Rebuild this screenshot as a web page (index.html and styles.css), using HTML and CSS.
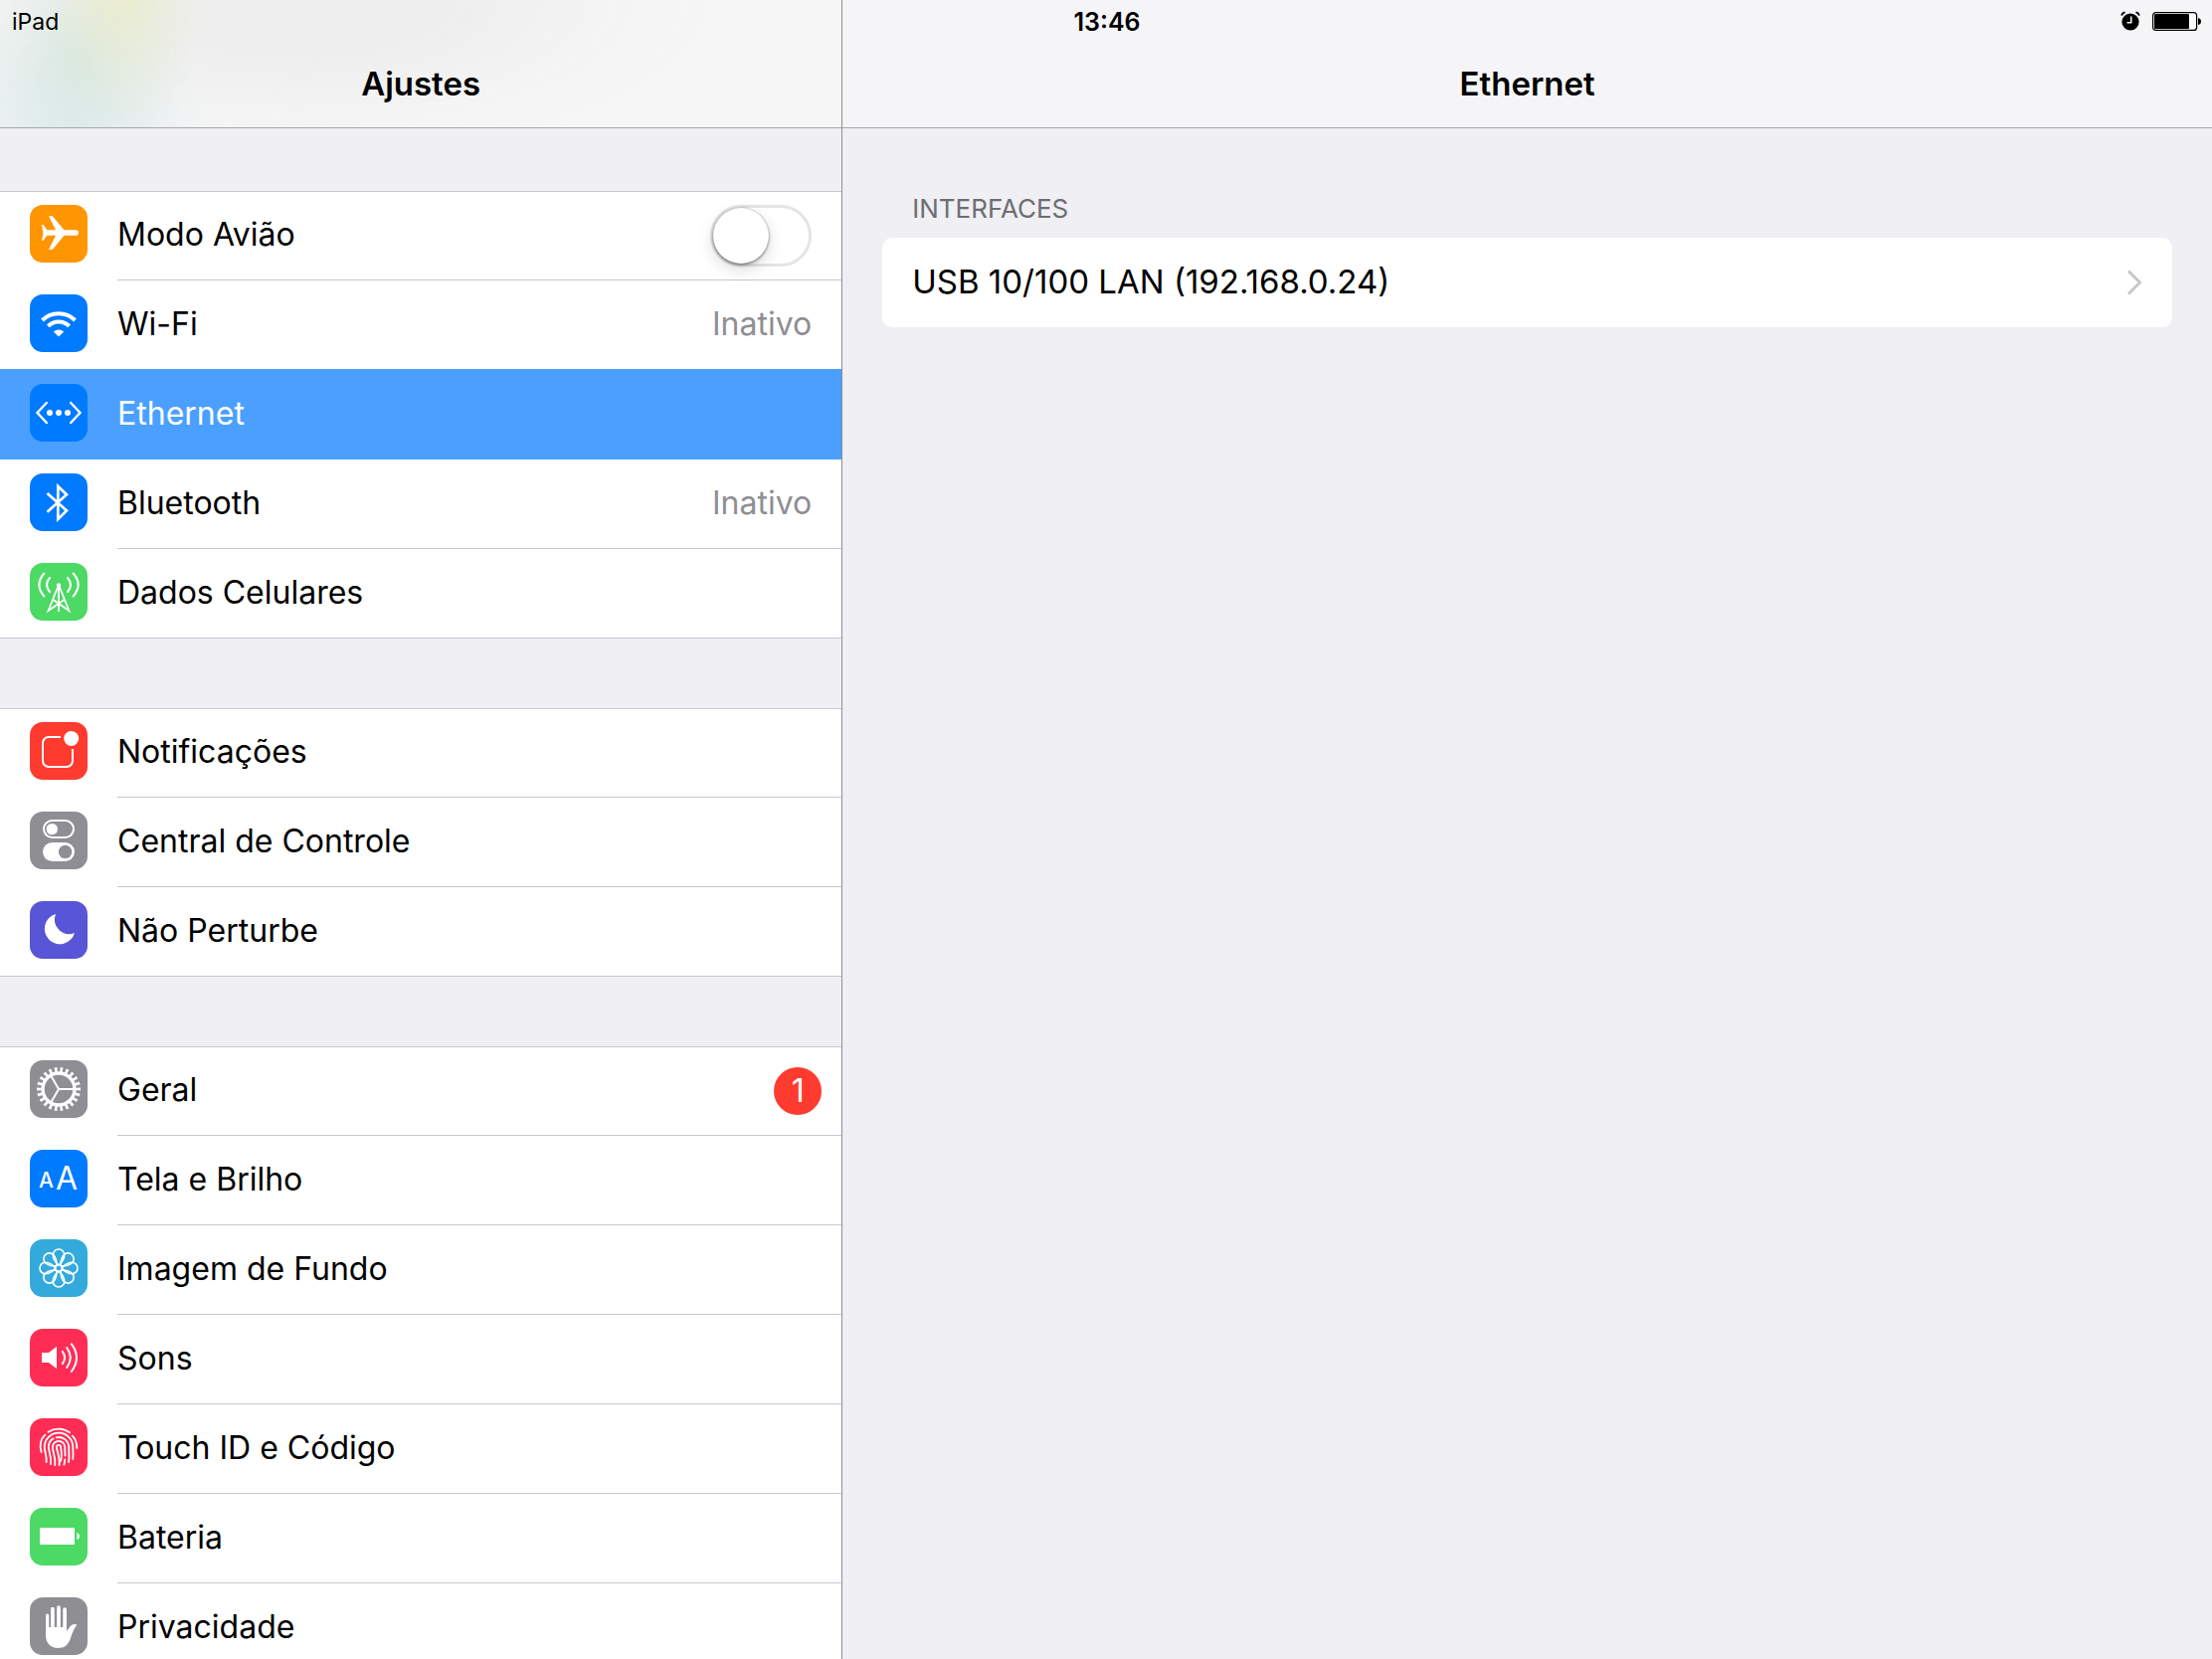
FILE: index.html
```html
<!DOCTYPE html>
<html lang="pt-BR">
<head>
    <meta charset="UTF-8">
    <meta name="viewport" content="width=device-width, initial-scale=1.0">
    <title>Ajustes</title>
    <link rel="stylesheet" href="styles.css">
</head>
<body>
    <div class="status-bar">
        <span class="device">iPad</span>
        <time class="clock">13:46</time>
        <div class="status-icons">
            <svg width="20" height="20" viewBox="0 0 20 20" role="img" aria-label="Alarme">
                <circle cx="10" cy="11" r="8.6"/>
                <path d="M1.2 4.6A4 4 0 0 1 4.6 1.4M18.8 4.6A4 4 0 0 0 15.4 1.4" fill="none" stroke="#000" stroke-width="1.8"/>
                <path d="M10.7 5.5v6.2H6.5" fill="none" stroke="#f5f5f7" stroke-width="1.6"/>
            </svg>
            <svg width="50" height="20" viewBox="0 0 50 20" role="img" aria-label="Bateria">
                <rect x="0.6" y="1.6" width="44" height="17.8" rx="3" fill="#fff" stroke="#000" stroke-width="1.2"/>
                <rect x="2" y="3" width="35" height="15" rx="1"/>
                <path d="M46 7q3 .5 3 3.5t-3 3.5z"/>
            </svg>
        </div>
    </div>

    <div class="app">
        <section class="sidebar">
            <header class="navbar navbar-sidebar">
                <h1>Ajustes</h1>
            </header>
            <nav class="menu">
                <ul class="group">
                    <li>
                        <label class="row" for="airplane">
                            <svg class="icon orange" viewBox="0 0 58 58">
                                <path class="fill" d="M12 20h1.6l3.6 5.3H26L19 11.3h3.7L34.5 25.3H46.3a2.7 2.7 0 0 1 0 5.4H34.5L22.7 45H19l7-14.3h-8.8L13.6 36H12l1.4-8z"/>
                            </svg>
                            <span class="content">
                                <span class="title">Modo Avião</span>
                                <input class="switch" type="checkbox" role="switch" id="airplane">
                            </span>
                        </label>
                    </li>
                    <li>
                        <a class="row" href="#wifi">
                            <svg class="icon blue" viewBox="0 0 58 58">
                                <path class="line" stroke-width="4" d="M12.5 26A23.3 23.3 0 0 1 45.5 26M18.4 31.9A15 15 0 0 1 39.6 31.9"/>
                                <path class="fill" d="M29 42.5L23.8 37.5A7.8 7.8 0 0 1 34.2 37.5z"/>
                            </svg>
                            <span class="content"><span class="title">Wi-Fi</span><span class="value">Inativo</span></span>
                        </a>
                    </li>
                    <li>
                        <a class="row selected" href="#ethernet" aria-current="page">
                            <svg class="icon blue" viewBox="0 0 58 58">
                                <path class="line" stroke-width="2.4" stroke-linecap="round" d="M16.8 19L7.5 29l9.3 10M41.2 19l9.3 10-9.3 10"/>
                                <circle class="fill" cx="20" cy="29" r="3"/>
                                <circle class="fill" cx="29" cy="29" r="3"/>
                                <circle class="fill" cx="38" cy="29" r="3"/>
                            </svg>
                            <span class="content"><span class="title">Ethernet</span></span>
                        </a>
                    </li>
                    <li>
                        <a class="row" href="#bluetooth">
                            <svg class="icon blue" viewBox="0 0 58 58">
                                <path class="line" stroke-width="2.7" d="M17.5 20L37 37.4L28.3 46V13L37 21.3L17.5 38.7"/>
                            </svg>
                            <span class="content"><span class="title">Bluetooth</span><span class="value">Inativo</span></span>
                        </a>
                    </li>
                    <li>
                        <a class="row" href="#celular">
                            <svg class="icon green" viewBox="0 0 58 58">
                                <circle class="fill" cx="29" cy="22.5" r="2.2"/>
                                <path class="line" stroke-width="1.8" d="M29 23v26M28.6 23L18.6 48L34.5 37M29.4 23L39.4 48L23.5 37"/>
                                <path class="line" stroke-width="2.1" stroke-linecap="round" d="M14.3 10.5Q4.5 22 14.3 33.5M43.7 10.5Q53.5 22 43.7 33.5M20 15Q14 22 20 29M38 15Q44 22 38 29"/>
                            </svg>
                            <span class="content"><span class="title">Dados Celulares</span></span>
                        </a>
                    </li>
                </ul>

                <ul class="group">
                    <li>
                        <a class="row" href="#notificacoes">
                            <svg class="icon red" viewBox="0 0 58 58">
                                <path class="line" stroke-width="2" d="M31 15H19a6 6 0 0 0-6 6v18a6 6 0 0 0 6 6h18a6 6 0 0 0 6-6V27"/>
                                <circle class="fill" cx="41.7" cy="16.5" r="7.5"/>
                            </svg>
                            <span class="content"><span class="title">Notificações</span></span>
                        </a>
                    </li>
                    <li>
                        <a class="row" href="#controle">
                            <svg class="icon gray" viewBox="0 0 58 58">
                                <rect class="line" stroke-width="2" x="14" y="9" width="30" height="17" rx="8.5"/>
                                <circle class="fill" cx="22.3" cy="17.6" r="5.7"/>
                                <rect class="fill" x="13" y="31" width="32" height="19" rx="9.5"/>
                                <circle cx="35.6" cy="40.4" r="6.7" fill="#8e8e93"/>
                            </svg>
                            <span class="content"><span class="title">Central de Controle</span></span>
                        </a>
                    </li>
                    <li>
                        <a class="row" href="#nao-perturbe">
                            <svg class="icon purple" viewBox="0 0 58 58">
                                <path class="fill" d="M26 13A15.4 15.4 0 1 0 45 32A14.6 14.6 0 0 1 26 13z"/>
                            </svg>
                            <span class="content"><span class="title">Não Perturbe</span></span>
                        </a>
                    </li>
                </ul>

                <ul class="group">
                    <li>
                        <a class="row" href="#geral">
                            <svg class="icon gray" viewBox="0 0 58 58">
                                <!-- 22 teeth: the dash pattern is one tooth and one gap -->
                                <circle class="line" cx="29" cy="29" r="19" stroke-width="6" pathLength="220" stroke-dasharray="4.8 5.2" stroke-dashoffset="2.4"/>
                                <circle class="line" cx="29" cy="29" r="16" stroke-width="3.4"/>
                                <path class="line" stroke-width="2" d="M29 29H44M29 29L21.5 16M29 29L21.5 42"/>
                            </svg>
                            <span class="content"><span class="title">Geral</span><span class="badge">1</span></span>
                        </a>
                    </li>
                    <li>
                        <a class="row" href="#tela">
                            <svg class="icon blue" viewBox="0 0 58 58">
                                <text class="letter-small" x="9" y="38">A</text>
                                <text class="letter-large" x="26" y="40">A</text>
                            </svg>
                            <span class="content"><span class="title">Tela e Brilho</span></span>
                        </a>
                    </li>
                    <li>
                        <a class="row" href="#fundo">
                            <svg class="icon cyan" viewBox="0 0 58 58">
                                <defs>
                                    <path id="petal" d="M29 25.8C26.4 24 23.2 19.6 23.2 15.8a5.8 5.8 0 0 1 11.6 0C34.8 19.6 31.6 24 29 25.8z"/>
                                </defs>
                                <g class="line" stroke-width="1.6">
                                    <use href="#petal"/>
                                    <use href="#petal" transform="rotate(45 29 29)"/>
                                    <use href="#petal" transform="rotate(90 29 29)"/>
                                    <use href="#petal" transform="rotate(135 29 29)"/>
                                    <use href="#petal" transform="rotate(180 29 29)"/>
                                    <use href="#petal" transform="rotate(225 29 29)"/>
                                    <use href="#petal" transform="rotate(270 29 29)"/>
                                    <use href="#petal" transform="rotate(315 29 29)"/>
                                    <circle cx="29" cy="29" r="3.4"/>
                                </g>
                            </svg>
                            <span class="content"><span class="title">Imagem de Fundo</span></span>
                        </a>
                    </li>
                    <li>
                        <a class="row" href="#sons">
                            <svg class="icon pink" viewBox="0 0 58 58">
                                <path class="fill" d="M12 24h7l8-6.3v22.6L19 34h-7z"/>
                                <path class="line" stroke-width="2" stroke-linecap="round" d="M32.8 22.8Q37.4 29 32.8 35.2M37.2 19Q44.4 29 37.2 39M41.8 15.2Q52.2 29 41.8 43"/>
                            </svg>
                            <span class="content"><span class="title">Sons</span></span>
                        </a>
                    </li>
                    <li>
                        <a class="row" href="#touch-id">
                            <svg class="icon pink" viewBox="0 0 58 58">
                                <g class="line" stroke-width="1.8" stroke-linecap="round">
                                    <path d="M18.5 13.8A19 19 0 0 1 40 14.3"/>
                                    <path d="M11.5 34Q8.5 23 15.3 16.6M42.8 17.6Q47.3 22 47.3 30"/>
                                    <path d="M16.6 44C17.4 38 14.7 34 14.7 29A14.3 14.3 0 0 1 43.3 29C43.3 33 44 36 43.2 41"/>
                                    <path d="M21 46C22 37 18.8 34 18.8 29Q19 22.5 23.6 20.4M26.6 19.3A10.2 10.2 0 0 1 39.2 29C39.2 35 40 39 39 44"/>
                                    <path d="M25.3 47.2C26.3 38 22.8 34 22.8 29A6.2 6.2 0 0 1 35.2 29C35.2 32 35.6 35 35.5 37.5M35.2 41.5Q35 44 34.4 46.5"/>
                                    <path d="M29.6 47.2C30.4 38 26.8 32 26.9 29A2.1 2.1 0 0 1 31.1 29Q32.6 39 30.9 43"/>
                                </g>
                            </svg>
                            <span class="content"><span class="title">Touch ID e Código</span></span>
                        </a>
                    </li>
                    <li>
                        <a class="row" href="#bateria">
                            <svg class="icon green" viewBox="0 0 58 58">
                                <rect class="fill" x="10" y="20" width="35" height="17" rx="1"/>
                                <path class="fill" d="M47.3 25q2.7.8 2.7 3.5t-2.7 3.5z"/>
                            </svg>
                            <span class="content"><span class="title">Bateria</span></span>
                        </a>
                    </li>
                    <li>
                        <a class="row" href="#privacidade">
                            <svg class="icon gray" viewBox="0 0 58 58">
                                <path class="fill" d="M16 30V38C16 46 21 51 28 51C35 51 38.5 48 41 41C43 35 44.5 31 47.5 27.6C44.5 26.2 41.8 27.5 40 30L37 34V30z"/>
                                <path class="line" stroke-width="3.2" stroke-linecap="round" d="M17.6 18V32"/>
                                <path class="line" stroke-width="3.7" stroke-linecap="round" d="M22.9 11.6V32M29 10V32M35.1 12V32"/>
                            </svg>
                            <span class="content"><span class="title">Privacidade</span></span>
                        </a>
                    </li>
                </ul>
            </nav>
        </section>

        <main class="detail">
            <header class="navbar">
                <h1>Ethernet</h1>
            </header>
            <section class="panel">
                <h2>Interfaces</h2>
                <a class="card" href="#usb-lan">
                    <span class="title">USB 10/100 LAN (192.168.0.24)</span>
                    <svg class="chevron" width="16" height="26" viewBox="0 0 16 26" aria-hidden="true">
                        <path d="M2 1.5L13.5 13L2 24.5" fill="none" stroke="#c7c7cc" stroke-width="3"/>
                    </svg>
                </a>
            </section>
        </main>
    </div>
</body>
</html>
```
FILE: styles.css
```css
* {
    box-sizing: border-box;
}
body {
    margin: 0;
    font-family: Inter, "Liberation Sans", sans-serif;
    font-size: 33px;
    line-height: 40px;
    color: #000;
    background-color: #efeff4;
}
a {
    color: inherit;
    text-decoration: none;
}

/* Status bar, floats over both navigation bars */
.status-bar {
    position: absolute;
    top: 0;
    left: 0;
    right: 0;
    display: grid;
    grid-template-columns: 1fr auto 1fr;
    align-items: center;
    height: 40px;
    padding: 0 10px 0 12px;
    font-size: 23px;
}
.device,
.clock {
    padding-top: 2px;
}
.clock {
    font-size: 25px;
    font-weight: 600;
}
.status-icons {
    display: flex;
    justify-content: flex-end;
    gap: 12px;
}

.app {
    display: grid;
    grid-template-columns: 8fr 13fr;
    height: 100vh;
}
.sidebar {
    display: flex;
    flex-direction: column;
    min-height: 0;
    border-right: 1px solid #8e8e93;
}
.navbar {
    flex: none;
    padding: 64px 0 24px;
    border-bottom: 1px solid #a7a7aa;
    background-color: #f5f5f7;
    text-align: center;
}
.navbar h1 {
    margin: 0;
    font-size: 33px;
    font-weight: 600;
    line-height: 40px;
}
/* Soft colors of the wallpaper showing through the bar */
.navbar-sidebar {
    background:
        radial-gradient(ellipse 80px 120px at 125px 0, rgba(234, 236, 200, 0.8), rgba(234, 236, 200, 0.3) 55%, transparent),
        radial-gradient(ellipse 110px 130px at 80px 60px, rgba(212, 230, 222, 0.8), rgba(212, 230, 222, 0.3) 55%, transparent),
        radial-gradient(ellipse 150px 120px at 70px 128px, rgba(220, 234, 238, 0.8), rgba(220, 234, 238, 0.3) 55%, transparent),
        radial-gradient(ellipse 480px 180px at 300px 0, #eeeeee 30%, rgba(242, 242, 242, 0.6) 65%, transparent),
        #f7f7f7;
}

/* Menu */
.menu {
    overflow-y: auto;
    scrollbar-width: none;
    padding-top: 63px;
    font-size: 32px;
}
.group {
    margin: 0 0 70px;
    padding: 0;
    list-style: none;
    border: 1px solid #c8c7cc;
    border-width: 1px 0;
    background-color: #fff;
}
.row {
    display: flex;
    gap: 30px;
    padding-left: 30px;
}
.icon {
    flex: none;
    width: 58px;
    height: 58px;
    margin-top: 14px;
    border-radius: 13px;
}
.content {
    flex: 1;
    display: flex;
    align-items: center;
    justify-content: space-between;
    height: 90px;
    padding-right: 30px;
    border-bottom: 1px solid #c8c7cc;
}
.group li:first-child .row {
    margin-top: -1px;
}
.group li:last-child .content {
    height: 89px;
    border-bottom: 0;
}
.row.selected {
    position: relative;
    margin-top: -1px;
    padding-top: 1px;
    color: #fff;
    background-color: #4ba0ff;
}
.selected .content {
    border-color: transparent;
}
.title,
.value {
    padding-bottom: 2px;
}
.value {
    color: #8e8e93;
}
.badge {
    width: 48px;
    margin-right: -10px;
    border-radius: 24px;
    line-height: 48px;
    text-align: center;
    color: #fff;
    background-color: #ff3b30;
}

.switch {
    appearance: none;
    display: flex;
    width: 102px;
    height: 62px;
    margin: 0;
    padding: 0;
    border: 3px solid #e5e5e5;
    border-radius: 31px;
    background-color: #fff;
}
.switch::before {
    content: "";
    width: 56px;
    height: 56px;
    border-radius: 50%;
    background-color: #fff;
    box-shadow: 0 0 2px rgba(0, 0, 0, 0.4), 0 2px 3px rgba(0, 0, 0, 0.3), 0 6px 16px rgba(0, 0, 0, 0.15);
}
.switch:checked {
    justify-content: flex-end;
    border-color: #4cd964;
    background-color: #4cd964;
}

/* Icon colors */
.orange { background-color: #ff9500; }
.blue { background-color: #007aff; }
.green { background-color: #4cd964; }
.red { background-color: #ff3b30; }
.gray { background-color: #8e8e93; }
.purple { background-color: #5856d6; }
.cyan { background-color: #34aadc; }
.pink { background-color: #ff2d55; }

.fill {
    fill: #fff;
}
.line {
    fill: none;
    stroke: #fff;
}
.letter-small,
.letter-large {
    fill: #fff;
    font-size: 21px;
    font-weight: 500;
}
.letter-large {
    font-size: 32px;
    font-weight: 400;
}

/* Detail */
.panel {
    padding: 61px 40px;
}
.panel h2 {
    margin: 0 0 9px;
    padding-left: 30px;
    font-size: 26px;
    font-weight: 400;
    text-transform: uppercase;
    color: #6d6d72;
}
.card {
    display: flex;
    align-items: center;
    justify-content: space-between;
    height: 90px;
    padding: 0 30px;
    border-radius: 10px;
    background-color: #fff;
}
```
